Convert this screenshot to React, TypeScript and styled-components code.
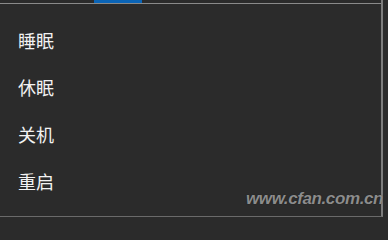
import React from "react";
import styled, { createGlobalStyle } from "styled-components";

const GlobalStyle = createGlobalStyle`
  html, body {
    margin: 0;
    padding: 0;
    background-color: #2b2b2b;
  }
`;

const SPage = styled.div`
  position: relative;
  width: 388px;
  height: 217px;
  overflow: hidden;
  background-color: #2b2b2b;
`;

const SPanel = styled.div`
  width: 383px;
  height: 217px;
  box-sizing: border-box;
  border-right: 2px solid #7d7d7d;
  border-bottom: 1px solid #6a6a6a;
  display: flex;
  flex-direction: column;
`;

const STabStrip = styled.div`
  height: 3px;
  display: flex;
`;

const STabIndicator = styled.div<{ $left: number; $width: number }>`
  margin-left: ${(p) => p.$left}px;
  width: ${(p) => p.$width}px;
  height: 3px;
  background-color: #0a64b6;
`;

const SDivider = styled.div`
  height: 1px;
  background-color: #8a8a8a;
`;

const SMenu = styled.div`
  display: flex;
  flex-direction: column;
  padding-top: 12px;
`;

const SMenuItem = styled.div`
  height: 47px;
  display: flex;
  align-items: center;
  padding-left: 18px;
  font-family: "Noto Sans CJK SC", "Noto Sans", sans-serif;
  font-size: 18px;
  color: #f2f2f2;
`;

const SWatermark = styled.div`
  position: absolute;
  right: 5px;
  bottom: 8px;
  font-family: "Liberation Sans", Arial, sans-serif;
  font-weight: bold;
  font-style: italic;
  font-size: 17px;
  letter-spacing: -0.4px;
  color: #8c8c8c;
  text-shadow: 0 0 1px rgba(0, 0, 0, 0.5);
`;

const items = ["睡眠", "休眠", "关机", "重启"];

const App = () => {
  return (
    <SPage>
      <GlobalStyle />
      <SPanel>
        <STabStrip>
          <STabIndicator $left={94} $width={48} />
        </STabStrip>
        <SDivider />
        <SMenu>
          {items.map((label) => (
            <SMenuItem key={label}>{label}</SMenuItem>
          ))}
        </SMenu>
      </SPanel>
      <SWatermark>www.cfan.com.cn</SWatermark>
    </SPage>
  );
};

export default App;
